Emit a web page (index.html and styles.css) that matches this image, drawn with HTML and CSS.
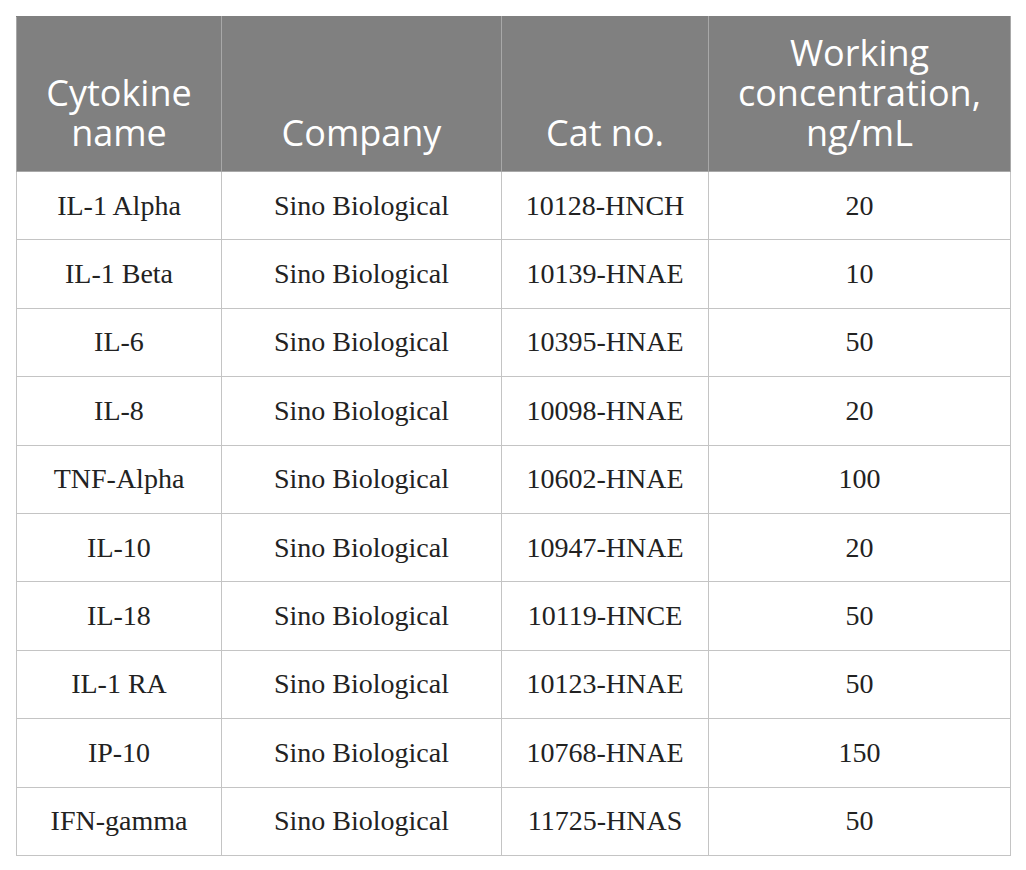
FILE: index.html
```html
<!DOCTYPE html>
<html>
<head>
    <meta charset="utf-8" />
    <title>Cytokines</title>
    <link rel="stylesheet" href="styles.css">
</head>
<body>
    <table class="cyto-table">
        <colgroup>
            <col class="col-name">
            <col class="col-company">
            <col class="col-cat">
            <col class="col-conc">
        </colgroup>
        <thead>
            <tr>
                <th>Cytokine<br>name</th>
                <th>Company</th>
                <th>Cat no.</th>
                <th>Working<br>concentration,<br>ng/mL</th>
            </tr>
        </thead>
        <tbody>
            <tr><td>IL-1 Alpha</td><td>Sino Biological</td><td>10128-HNCH</td><td>20</td></tr>
            <tr><td>IL-1 Beta</td><td>Sino Biological</td><td>10139-HNAE</td><td>10</td></tr>
            <tr><td>IL-6</td><td>Sino Biological</td><td>10395-HNAE</td><td>50</td></tr>
            <tr><td>IL-8</td><td>Sino Biological</td><td>10098-HNAE</td><td>20</td></tr>
            <tr><td>TNF-Alpha</td><td>Sino Biological</td><td>10602-HNAE</td><td>100</td></tr>
            <tr><td>IL-10</td><td>Sino Biological</td><td>10947-HNAE</td><td>20</td></tr>
            <tr><td>IL-18</td><td>Sino Biological</td><td>10119-HNCE</td><td>50</td></tr>
            <tr><td>IL-1 RA</td><td>Sino Biological</td><td>10123-HNAE</td><td>50</td></tr>
            <tr><td>IP-10</td><td>Sino Biological</td><td>10768-HNAE</td><td>150</td></tr>
            <tr><td>IFN-gamma</td><td>Sino Biological</td><td>11725-HNAS</td><td>50</td></tr>
        </tbody>
    </table>
</body>
</html>
```

FILE: styles.css
```css
body {
    margin: 0;
    padding: 16px;
    background: #fff;
}
.cyto-table {
    border-collapse: collapse;
    table-layout: fixed;
    width: 994px;
    font-family: "Liberation Serif", "Times New Roman", serif;
    font-size: 28px;
    color: #222;
}
.col-name {
    width: 205px;
}
.col-company {
    width: 280px;
}
.col-cat {
    width: 207px;
}
.col-conc {
    width: 302px;
}
.cyto-table th {
    height: 155px;
    box-sizing: border-box;
    padding: 0 4px 18px;
    background: #808080;
    color: #fff;
    font-family: "Open Sans", Lato, sans-serif;
    font-weight: normal;
    font-size: 36px;
    line-height: 40px;
    vertical-align: bottom;
    text-align: center;
    border: 1px solid #a8a8a8;
    border-top-color: #808080;
}
.cyto-table td {
    height: 67.4px;
    padding: 0 8px;
    text-align: center;
    vertical-align: middle;
    border: 1px solid #c4c4c4;
}
```
